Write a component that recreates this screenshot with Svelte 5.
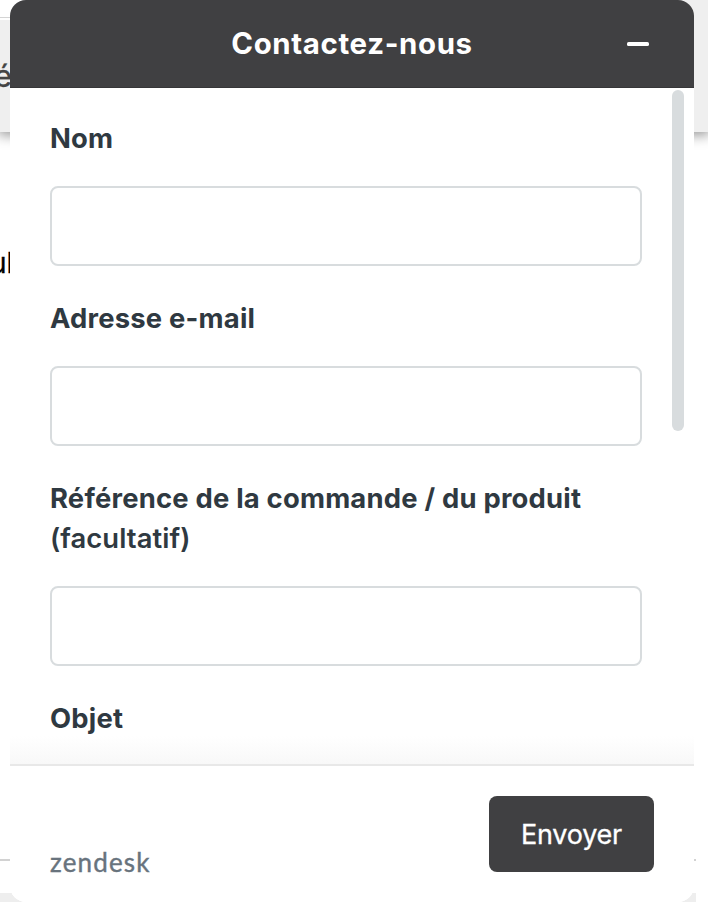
<script>
  const fields = [
    { id: 'name', label: 'Nom' },
    { id: 'email', label: 'Adresse e-mail' },
    { id: 'reference', label: 'Référence de la commande / du produit', optional: '(facultatif)' },
    { id: 'subject', label: 'Objet' }
  ];
</script>

<div class="page">
  <div class="backdrop" aria-hidden="true">
    <div class="bar"><span>é</span></div>
    <div class="copy"><span>ul</span></div>
    <div class="rule"></div>
    <div class="base"></div>
  </div>

  <section class="widget">
    <header>
      <h1>Contactez-nous</h1>
      <button class="minimize" aria-label="Réduire">
        <svg width="22" height="4" viewBox="0 0 22 4"><rect width="22" height="4" rx="1.6" fill="#fff" /></svg>
      </button>
    </header>
    <form class="scroll">
      {#each fields as field}
        <div class="field">
          <label for={field.id}>
            <span>{field.label}</span>
            {#if field.optional}<span class="optional">{field.optional}</span>{/if}
          </label>
          <input id={field.id} type="text" />
        </div>
      {/each}
      <div class="thumb"></div>
      <div class="fade"></div>
    </form>
    <footer>
      <span class="brand">zendesk</span>
      <button class="send">Envoyer</button>
    </footer>
  </section>
</div>

<style>
  :global(body) { margin: 0; background: #fff; }
  * { box-sizing: border-box; }
  .page {
    position: relative;
    width: 708px;
    height: 902px;
    overflow: hidden;
    padding: 0 14px 0 10px;
    font-family: Inter, "Liberation Sans", sans-serif;
  }
  .backdrop {
    position: absolute;
    inset: 0;
    display: flex;
    flex-direction: column;
    padding-top: 17px;
    background: linear-gradient(#efefef, #efefef) right top / 30px 20px no-repeat, #fff;
  }
  .bar {
    flex: none;
    height: 115px;
    background: linear-gradient(#d4d4d4 1px, #fff 1px 3px, #efefef 3px) left / 20px 100% no-repeat, #efefef;
    box-shadow: 0 1px 12px 2px rgba(0, 0, 0, .42);
    clip-path: inset(0 0 -24px);
    color: #444;
  }
  .bar span {
    display: block;
    padding-top: 39px;
    margin-left: -6px;
    font-size: 31px;
    line-height: 40px;
    -webkit-text-stroke: .3px #444;
  }
  .copy { flex: none; height: 727px; color: #000; }
  .copy span {
    display: block;
    padding-top: 111px;
    margin-left: -10px;
    font-size: 28px;
    line-height: 40px;
    -webkit-text-stroke: .3px #000;
  }
  .rule { flex: none; width: 696px; height: 34px; border-top: 2px solid #d2d2d2; }
  .base { flex: none; width: 696px; height: 9px; background: #eee; }
  .widget {
    position: relative;
    display: flex;
    flex-direction: column;
    width: 684px;
    height: 902px;
    overflow: hidden;
    border-radius: 16px;
    background: #fff;
  }
  .page::before {
    content: "";
    position: absolute;
    inset: 0 14px 0 10px;
    border-radius: 16px;
    box-shadow: 0 0 16px rgba(0, 0, 0, .2);
  }
  header {
    flex: none;
    display: flex;
    align-items: center;
    height: 88px;
    padding: 0 45px 0 86px;
    background: #404042;
    border-bottom: 1px solid #363638;
  }
  h1 {
    flex: 1;
    margin: 0 19px 0 0;
    color: #fff;
    font-size: 29.4px;
    font-weight: 700;
    line-height: 40px;
    text-align: center;
    letter-spacing: .65px;
  }
  button { border: 0; font: inherit; }
  .minimize { display: flex; padding: 0; background: none; }
  .scroll {
    position: relative;
    flex: none;
    height: 676px;
    padding: 30px 52px 0 40px;
    overflow: hidden;
  }
  .field { margin-bottom: 32px; }
  label {
    display: block;
    margin-bottom: 28px;
    color: #2f3941;
    font-size: 27.4px;
    font-weight: 700;
    line-height: 40px;
    letter-spacing: .21px;
  }
  label span { display: block; white-space: nowrap; }
  .optional { font-weight: 600; letter-spacing: .08px; }
  input {
    display: block;
    width: 592px;
    height: 80px;
    border: 2px solid #d8dcde;
    border-radius: 8px;
    background: #fff;
  }
  .thumb {
    position: absolute;
    top: 2px;
    right: 10px;
    width: 12px;
    height: 341px;
    border-radius: 6px;
    background: #d8dcde;
  }
  .fade {
    position: absolute;
    inset: auto 0 0;
    height: 28px;
    background: linear-gradient(rgba(248, 248, 248, 0), #f8f8f8);
  }
  footer {
    flex: 1;
    position: relative;
    display: flex;
    align-items: flex-end;
    justify-content: space-between;
    padding: 0 40px 30px;
    border-top: 2px solid #e8e8e8;
    background: #fff;
  }
  .brand {
    margin-bottom: -5px;
    color: #68737d;
    font: 400 26px/30px Lato, sans-serif;
    letter-spacing: 1.15px;
    -webkit-text-stroke: .4px #68737d;
  }
  .send {
    width: 165px;
    height: 76px;
    padding: 0;
    border-radius: 8px;
    background: #404042;
    color: #fff;
    font-size: 27px;
    letter-spacing: -.25px;
    -webkit-text-stroke: .3px #fff;
  }
</style>
